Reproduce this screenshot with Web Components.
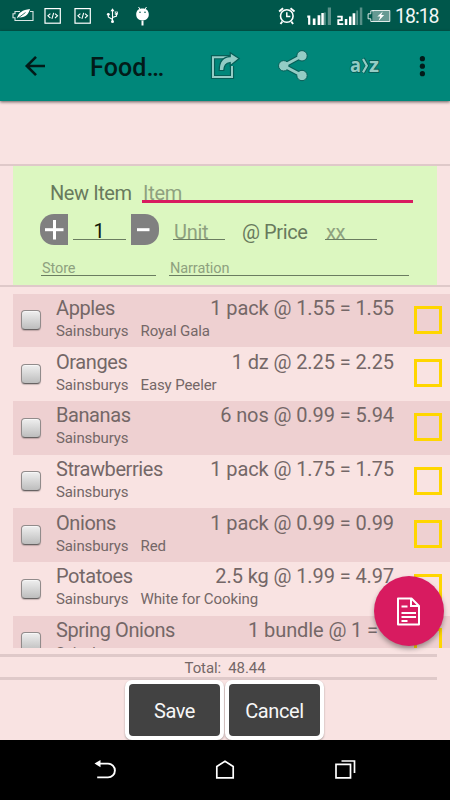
<!DOCTYPE html>
<html lang="en">
<head>
<meta charset="utf-8">
<title>Shopping list</title>
<style>
html,body{margin:0;padding:0;height:800px;overflow:hidden}
body{font-family:Roboto,sans-serif;background:#f9e3e2}
</style>
</head>
<body>
<food-app></food-app>
<script>
const define = (name, html, setup) => customElements.define(name, class extends HTMLElement {
  constructor() {
    super();
    const t = document.createElement('template');
    t.innerHTML = '<style>*{box-sizing:border-box}svg{display:block;flex:none;overflow:visible}</style>' + html;
    this.attachShadow({mode: 'open'}).append(t.content.cloneNode(true));
  }
  connectedCallback() { if (setup) setup(this, this.shadowRoot); }
});

define('status-bar', `
<style>
:host{display:flex;height:31px;background:#00574b;align-items:center;padding:0 11px 0 12px}
.l,.r{display:flex;align-items:center}
.r{margin-left:auto}
.time{color:#fff;font-size:19.500px;line-height:31px;width:44px;white-space:nowrap;opacity:.95;letter-spacing:-1px;padding:2px 0 0 0}
</style>
<div class="l">
<svg width="145" height="31" viewBox="12 0 145 31" fill="none" stroke="#fff">
 <path d="M20 11.500h-5v2.300h-2v4h2v2.700h18v-9h-3" stroke-width="1.100" opacity=".85"/>
 <path d="M17 18.500c1-6 5.500-8.500 13-9.500-1.500 5-4 9-11.500 8.500z" fill="#fff" stroke="none"/>
 <path d="M17.500 18.500l8-6" stroke="#00574b" stroke-width=".8"/>
 <g id="c"><rect x="45" y="8.600" width="15.300" height="14.600" stroke-width="1.200"/><path d="M50.400 13.600l-2.500 2.200 2.500 2.200M55 13.600l2.500 2.200-2.500 2.200M53.700 12.800l-1.800 6" stroke-width="1.100"/></g>
 <use href="#c" x="30"/>
 <path d="M112.500 10v11M112.500 19.500l-4.200-2.500v-2.500M112.500 17.500l4-1.500v-3" stroke-width="1.100"/>
 <path d="M110.500 11.300l2-3 2 3z" fill="#fff" stroke="none"/><circle cx="108.300" cy="14.300" r="1.400" fill="#fff" stroke="none"/><circle cx="112.500" cy="21.400" r="1.500" fill="#fff" stroke="none"/><rect x="115.200" y="12" width="2.300" height="2.300" stroke-width=".8"/>
 <path d="M138.500 7l1.800 2.500M146.500 7l-1.800 2.500" stroke-width="1"/>
 <path d="M136.200 14.500c0-4 2.500-6 6.300-6s6.300 2 6.300 6c0 3.500-2.500 5.800-6.300 5.800s-6.300-2.300-6.300-5.800z" fill="#fff" stroke="none"/>
 <path d="M142.500 20.500v5" stroke-width="2"/><circle cx="140" cy="12.200" r=".8" fill="#00574b" stroke="none"/><circle cx="145" cy="12.200" r=".8" fill="#00574b" stroke="none"/>
</svg></div>
<div class="r">
<svg width="118" height="31" viewBox="277.700 0 118 31" fill="none" stroke="#fff">
 <circle cx="287.500" cy="16" r="6.300" stroke-width="1.600"/><path d="M287.500 12.200v4.300h3.500" stroke-width="1.500"/><path d="M279.800 11.500l4-3.200M295.200 11.500l-4-3.200M283 21.500l-1.800 2.500M292 21.500l1.800 2.500" stroke-width="1.900"/>
 <path d="M308 16.700h1.900v8" stroke-width="2.200"/>
 <g fill="#fff" stroke="none"><path d="M313.500 18.500h2.700V25h-2.700zM318.300 15.200h2.700V25h-2.700z"/><path d="M324.500 12.500h2V25h-2z" opacity=".35"/><path d="M322 13h2.500V25H322z"/><path d="M328.500 7.500h3.200V25h-3.200z" opacity=".35"/></g>
 <path d="M338 16.600h4.500v3.500h-3.500v4h5" stroke-width="1.900"/>
 <g fill="#fff" stroke="none"><path d="M345.500 19h2.500V25h-2.500zM349.700 16.500h2.500V25h-2.500zM353.300 13.200h2.700V25h-2.700z"/><path d="M357 10.500h1.800V25H357zM360.500 7.500h2.500V25h-2.500z" opacity=".35"/></g>
 <path d="M373 10.500h17.500v11H373z" fill="#fff" fill-opacity=".4" stroke="none"/><path d="M373 10.500h17.500v11H371.500v-2.700h-2.700v-5h2.700v-3h3" stroke-width="1" opacity=".85"/>
 <path d="M383.500 11.500l-5.500 5h3l-1.800 4.500 5.700-6h-3z" fill="#fff" stroke="none"/>
</svg>
<span class="time">18:18</span></div>`);

define('app-bar', `
<style>
:host{display:flex;height:70px;background:#00877a;align-items:center;padding-left:24px;box-shadow:0 1px 3px #0009;position:relative}
h1{margin:4px 0 0 44px;width:120px;font:500 25px/32px Roboto,sans-serif;color:#021b19;letter-spacing:.15px}
</style>
<svg width="22" height="22" viewBox="0 0 22 22" fill="none" stroke="#021b19" stroke-width="2.600"><path d="M21 11H3M12 1.800L2.800 11l9.200 9.200"/></svg>
<h1>Food…</h1>
<svg width="30" height="30" viewBox="210 51 30 30" fill="none"><path d="M230 57.200h-17V77h19V66" stroke="#075e57" stroke-width="4.200"/><path d="M228 57.200h-15V77h19V66" stroke="#94ccc5" stroke-width="2"/><path d="M219.200 70.500h4.600c0-4.500 2.500-7.500 6.400-8v3.300l9-7.300-9-5.800v4c-7.500.3-11 5.800-11 13.800z" fill="#94ccc5" stroke="#075e57" stroke-width="1.200"/></svg>
<svg style="margin-left:37px" width="32" height="34" viewBox="277 49.500 32 34"><path d="M302 56.300L283.700 66.300 302 76" fill="none" stroke="#075e57" stroke-width="5"/><g fill="#94ccc5" stroke="#075e57"><circle cx="302" cy="56.300" r="5.200"/><circle cx="283.700" cy="66.300" r="5.200"/><circle cx="302" cy="76" r="5.200"/></g><path d="M302 56.300L283.700 66.300 302 76" fill="none" stroke="#94ccc5" stroke-width="3"/></svg>
<svg style="margin-left:39px" width="34" height="24" viewBox="348 54 34 24"><g fill="#94ccc5" stroke="#075e57" stroke-width="1.800" paint-order="stroke" font-family="Open Sans" font-weight="700" font-size="20"><text x="350" y="72" textLength="11" lengthAdjust="spacingAndGlyphs">a</text><text x="369" y="72" textLength="10" lengthAdjust="spacingAndGlyphs">z</text></g><path d="M363 58.500l4 7.200-4 7.200" fill="none" stroke="#075e57" stroke-width="3.800"/><path d="M363 59l3.800 6.700-3.800 6.700" fill="none" stroke="#94ccc5" stroke-width="2.200"/></svg>
<svg style="margin-left:36px" width="10" height="24" viewBox="0 0 10 24" fill="#021b19"><circle cx="4.400" cy="4.700" r="2.600"/><circle cx="4.400" cy="12.200" r="2.600"/><circle cx="4.400" cy="19.700" r="2.600"/></svg>`);

define('text-field', `
<style>:host{display:block;border-bottom:1px solid #6a7c60;color:#8ea17f;font-size:20px;letter-spacing:-.3px;white-space:nowrap;padding-left:1px;line-height:22px}
:host([active]){border-bottom:3px solid #d81b60;line-height:24px}:host([small]){font-size:14.500px;letter-spacing:-.1px;line-height:21px;height:18px;padding-left:1px}
:host([filled]){color:#101a0c;text-align:center;padding:0 1px 0 0}</style><slot></slot>`);

define('step-button', `
<style>:host{display:block;width:28px;height:31px;background:#808080;border-radius:14px 0 0 14px}:host([minus]){border-radius:0 14px 14px 0}:host([minus]) .v{display:none}</style>
<svg width="28" height="31" stroke="#fff" stroke-width="3"><path class="v" d="M14.500 6v19.500"/><path class="h" d="M5 15.700h18.500"/></svg>`,
(h, r) => { if (h.hasAttribute('minus')) r.querySelector('.h').setAttribute('d', 'M6 15.700h12.500'); });

define('new-item-form', `
<style>
:host{display:block;height:123px;border-top:2px solid #dfc9c9;border-bottom:2px solid #dfc9c9;padding:0 13px}
.form{background:#dcf7c0;height:119px;color:#687a5d;font-size:20px;letter-spacing:-.42px;line-height:24px;white-space:nowrap;display:flow-root}
.row{display:flex}
.a{margin:15px 0 0 37px;height:24px;align-items:flex-start}.a span{width:92px}.a text-field{width:271px;height:22px}
.b{margin:9px 0 0 27px;height:31px}.b text-field{height:19px;margin-top:7px}
.c{margin:13px 0 0 28px}
</style>
<div class="form">
<div class="row a"><span>New Item</span><text-field active>Item</text-field></div>
<div class="row b"><step-button></step-button><text-field filled style="width:53px;margin-left:5px;line-height:21px">1</text-field><step-button minus style="margin-left:5px"></step-button><text-field style="width:52px;margin-left:14px">Unit</text-field><span style="width:83px;margin:6px 0 0 17px;letter-spacing:-.4px">@ Price</span><text-field style="width:52px">xx</text-field></div>
<div class="row c"><text-field small style="width:115px">Store</text-field><text-field small style="width:240px;margin-left:13px">Narration</text-field></div>
</div>`);

define('item-row', `
<style>
:host{display:flex;height:53.700px;width:437px;flex:none;color:#746767;white-space:nowrap}
:host(:nth-child(odd)){background:#eed0d1}
.cb{width:20px;height:20px;margin:16.500px 15px 0 8px;border:1px solid #918b8b;border-bottom-color:#686363;border-radius:4px;background:linear-gradient(#efefef,#bdbdbd);box-shadow:0 1px 1px #0003,inset 0 1px #fff8;flex:none}
.body{width:338px}.top{display:flex;justify-content:space-between;font-size:20px;letter-spacing:-.42px;line-height:24px;padding-top:2.200px}
.amt{letter-spacing:-.1px}
.sub{display:flex;font-size:15px;letter-spacing:-.1px;line-height:18px;margin-top:2px;gap:12px}
.sq{width:28px;height:28px;margin:12px 0 0 20px;border:3px solid #ffd600}
</style>
<div class="cb"></div><div class="body"><div class="top"><slot></slot><span class="amt"></span></div><div class="sub"><span class="shop"></span><span class="note"></span></div></div><div class="sq"></div>`,
(h, r) => { r.querySelector('.amt').textContent = h.getAttribute('amount'); r.querySelector('.shop').textContent = h.getAttribute('shop') || ''; r.querySelector('.note').textContent = h.getAttribute('note') || ''; });

define('item-list', `<style>:host{display:flex;flex-direction:column;height:354.300px;margin:6.700px 0 0 13px;overflow:hidden}</style><slot></slot>`);

define('total-bar', `<style>:host{display:block;height:26px;width:437px;margin-top:6px;border-top:3px solid #dfc9c9;border-bottom:3px solid #dfc9c9;box-sizing:border-box;color:#746767;font-size:15px;letter-spacing:-.1px;line-height:22px;text-align:center;white-space:pre;padding-left:13px}</style><slot></slot>`);

define('action-button', `<style>:host{display:block;box-sizing:border-box;width:99px;height:60px;border:4px solid #fff;border-radius:7px;background:#fff;box-shadow:0 1px 2px #0005}
div{background:#424242;border-radius:4px;height:52px;color:#f7f7f7;font-size:20px;letter-spacing:-.4px;line-height:54px;text-align:center}</style><div><slot></slot></div>`);

define('fab-button', `<style>:host{position:absolute;left:373.500px;top:576px;width:70px;height:70px;border-radius:50%;background:#d81b60;box-shadow:0 3px 5px #0005}</style>
<svg width="70" height="70" fill="none" stroke="#fff" stroke-width="2"><path d="M24 22.500h13.500l7.500 7.500v18.500H24z" stroke-linejoin="round"/><path d="M37 22.500V30h8" /><path d="M27.500 30.500h6M27.500 37h14.500M27.500 41h14.500M27.500 45h6"/></svg>`);

define('nav-bar', `<style>:host{display:flex;box-sizing:border-box;height:60px;background:#000;align-items:center;justify-content:space-between;padding:0 94px}</style>
<svg width="22" height="22" fill="none" stroke="#fff" stroke-width="1.900"><path d="M6 4.600h8a6.800 6.800 0 0 1 0 13.800H3.200"/><path d="M.5 4.600l6-3.600v7.200z" fill="#fff" stroke="none"/></svg>
<svg width="22" height="22" fill="none" stroke="#fff" stroke-width="1.700"><path d="M2.800 18.800V7.500L11 2.200 19.200 7.500v11.300z"/></svg>
<svg width="22" height="22" fill="none" stroke="#fff" stroke-width="1.700"><path d="M2 5.300h14.500v13.500H2zM7.500 2h13v12"/></svg>`);

define('food-app', `
<style>
:host{display:block;width:450px;height:800px;position:relative;background:#f9e3e2;overflow:hidden}
new-item-form{margin-top:63px;box-sizing:border-box}
.actions{display:flex;height:60px;padding-left:125px;gap:1px}
</style>
<status-bar></status-bar><app-bar></app-bar>
<new-item-form></new-item-form>
<item-list>
<item-row amount="1 pack @ 1.55 = 1.55" shop="Sainsburys" note="Royal Gala">Apples</item-row>
<item-row amount="1 dz @ 2.25 = 2.25" shop="Sainsburys" note="Easy Peeler">Oranges</item-row>
<item-row amount="6 nos @ 0.99 = 5.94" shop="Sainsburys">Bananas</item-row>
<item-row amount="1 pack @ 1.75 = 1.75" shop="Sainsburys">Strawberries</item-row>
<item-row amount="1 pack @ 0.99 = 0.99" shop="Sainsburys" note="Red">Onions</item-row>
<item-row amount="2.5 kg @ 1.99 = 4.97" shop="Sainsburys" note="White for Cooking">Potatoes</item-row>
<item-row amount="1 bundle @ 1 = 1" shop="Sainsburys">Spring Onions</item-row>
</item-list>
<total-bar>Total:  48.44</total-bar>
<div class="actions"><action-button>Save</action-button><action-button>Cancel</action-button></div>
<nav-bar></nav-bar>
<fab-button></fab-button>`);
</script>
</body>
</html>
